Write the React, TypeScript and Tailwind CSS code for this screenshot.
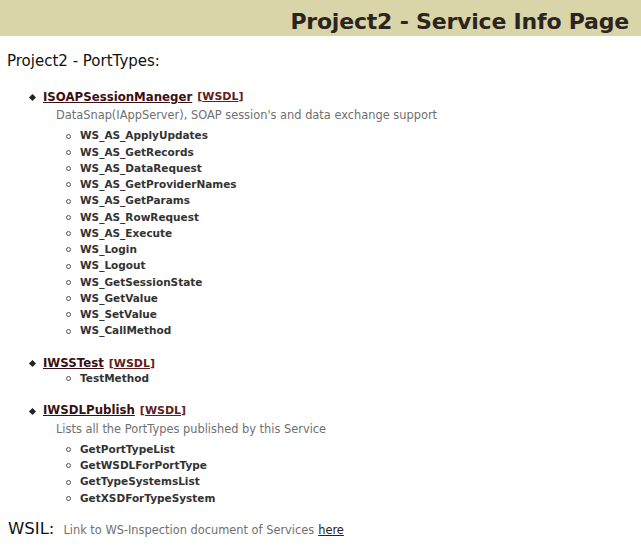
import React from 'react';

interface PortType {
  name: string;
  desc?: string;
  methods: string[];
}

const PORT_TYPES: PortType[] = [
  {
    name: 'ISOAPSessionManeger',
    desc: "DataSnap(IAppServer), SOAP session's and data exchange support",
    methods: [
      'WS_AS_ApplyUpdates',
      'WS_AS_GetRecords',
      'WS_AS_DataRequest',
      'WS_AS_GetProviderNames',
      'WS_AS_GetParams',
      'WS_AS_RowRequest',
      'WS_AS_Execute',
      'WS_Login',
      'WS_Logout',
      'WS_GetSessionState',
      'WS_GetValue',
      'WS_SetValue',
      'WS_CallMethod',
    ],
  },
  { name: 'IWSSTest', methods: ['TestMethod'] },
  {
    name: 'IWSDLPublish',
    desc: 'Lists all the PortTypes published by this Service',
    methods: ['GetPortTypeList', 'GetWSDLForPortType', 'GetTypeSystemsList', 'GetXSDForTypeSystem'],
  },
];

const font = { fontFamily: '"DejaVu Sans", Verdana, sans-serif' };

export default function App() {
  return (
    <div className="w-[641px] h-[546px] bg-white overflow-hidden text-[#222]" style={font}>
      {/* header bar */}
      <div className="h-[36px] bg-[#d9d5a9] flex items-end justify-end pr-[12px]">
        <h1 className="text-[22px] font-bold leading-none text-[#2b2420] mb-[3px] tracking-[-0.2px]">
          Project2 - Service Info Page
        </h1>
      </div>

      <div className="pl-[7px] pt-[15px] text-[15px] leading-[20px] text-[#111]">Project2 - PortTypes:</div>

      <ul className="mt-[18px] pl-[30px]">
        {PORT_TYPES.map((pt) => (
          <li key={pt.name} className="mb-[16px]">
            <div className="flex items-center h-[17px]">
              <span className="w-[5px] h-[5px] rotate-45 bg-[#222] mr-[8px]" />
              <a href="#" className="text-[11.75px] font-bold text-[#3a1010] underline">
                {pt.name}
              </a>
              <span className="ml-[5px] text-[11px] font-bold text-[#602020]">
                [<a href="#" className="underline">WSDL</a>]
              </span>
            </div>
            {pt.desc && (
              <div className="pl-[26px] text-[11.4px] leading-[19px] text-[#707070]">{pt.desc}</div>
            )}
            <ul className={pt.desc ? 'pl-[38px] mt-[3px]' : 'pl-[38px] -mt-[2px]'}>
              {pt.methods.map((m) => (
                <li key={m} className="flex items-center h-[16.25px]">
                  <span className="w-[5px] h-[5px] rounded-full border border-[#555] mr-[9px] -ml-[2px]" />
                  <span className="text-[10.5px] font-bold text-[#333]">{m}</span>
                </li>
              ))}
            </ul>
          </li>
        ))}
      </ul>

      <div className="pl-[8px] flex items-baseline -mt-[6px]">
        <span className="text-[16.5px] text-[#111] mr-[9px]">WSIL:</span>
        <span className="text-[11.4px] text-[#707070]">Link to WS-Inspection document of Services</span>
        <a href="#" className="ml-[4px] text-[11.4px] text-[#223] underline">here</a>
      </div>
    </div>
  );
}
